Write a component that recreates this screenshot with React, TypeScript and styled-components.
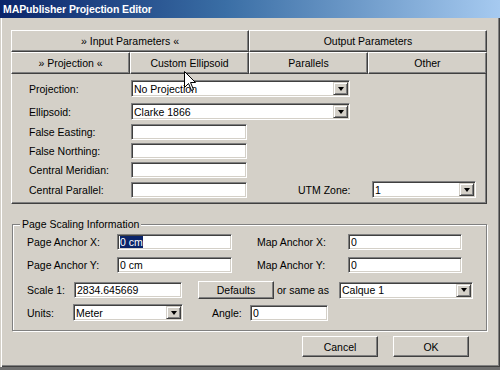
import styled, { createGlobalStyle } from "styled-components";

const GlobalStyle = createGlobalStyle`
  html, body {
    margin: 0;
    padding: 0;
    background: #6f6f6f;
  }
  body {
    font-family: "Liberation Sans", Arial, sans-serif;
    font-size: 10.5px;
    color: #000;
  }
`;

function ComboBox({ width, value, height = 17 }: { width: number; value: string; height?: number }) {
  return (
    <Field $w={width} $h={height}>
      <FieldText>{value}</FieldText>
      <DropButton>
        <DownArrow />
      </DropButton>
    </Field>
  );
}

function TextBox({ width, value, selected }: { width: number; value?: string; selected?: boolean }) {
  return (
    <Field $w={width} $h={16}>
      <FieldText>{selected ? <Selection>{value}</Selection> : value}</FieldText>
    </Field>
  );
}

function Cursor() {
  return (
    <CursorWrap>
      <svg width="13" height="21" viewBox="0 0 13 21">
        <path
          d="M0.5 0.5 L0.5 16.5 L4.5 12.5 L7.5 19.5 L9.5 18.5 L6.5 11.5 L11.5 11.5 Z"
          fill="#fff"
          stroke="#000"
          strokeWidth="1"
          strokeLinejoin="miter"
        />
      </svg>
    </CursorWrap>
  );
}

function App() {
  return (
    <>
      <GlobalStyle />
      <Window>
        <TitleBar>
          <Title>MAPublisher Projection Editor</Title>
        </TitleBar>
        <Body>
          <TabRow $cols={2}>
            <Tab>» Input Parameters «</Tab>
            <Tab>Output Parameters</Tab>
          </TabRow>
          <TabRow $cols={4}>
            <Tab>» Projection «</Tab>
            <Tab>Custom Ellipsoid</Tab>
            <Tab>Parallels</Tab>
            <Tab>Other</Tab>
          </TabRow>

          <Panel>
            <Row $mt={0}>
              <Label $w={102}>Projection:</Label>
              <ComboBox width={219} value="No Projection" />
            </Row>
            <Row $mt={6}>
              <Label $w={102}>Ellipsoid:</Label>
              <ComboBox width={219} value="Clarke 1866" />
            </Row>
            <Row $mt={4}>
              <Label $w={102}>False Easting:</Label>
              <TextBox width={116} />
            </Row>
            <Row $mt={3}>
              <Label $w={102}>False Northing:</Label>
              <TextBox width={116} />
            </Row>
            <Row $mt={3}>
              <Label $w={102}>Central Meridian:</Label>
              <TextBox width={116} />
            </Row>
            <Row $mt={3}>
              <Label $w={102}>Central Parallel:</Label>
              <TextBox width={116} />
              <Label $w={74} $ml={51}>UTM Zone:</Label>
              <ComboBox width={104} value="1" />
            </Row>
          </Panel>

          <GroupBox>
            <Legend>Page Scaling Information</Legend>
            <Row $mt={0}>
              <Label $w={90}>Page Anchor X:</Label>
              <TextBox width={115} value="0 cm" selected />
              <Label $w={91} $ml={25}>Map Anchor X:</Label>
              <TextBox width={114} value="0" />
            </Row>
            <Row $mt={7}>
              <Label $w={90}>Page Anchor Y:</Label>
              <TextBox width={115} value="0 cm" />
              <Label $w={91} $ml={25}>Map Anchor Y:</Label>
              <TextBox width={114} value="0" />
            </Row>
            <Row $mt={8}>
              <Label $w={47}>Scale 1:</Label>
              <TextBox width={108} value="2834.645669" />
              <Button $w={76} $h={18} $ml={16}>Defaults</Button>
              <Label $w={62} $ml={3}>or same as</Label>
              <ComboBox width={134} value="Calque 1" />
            </Row>
            <Row $mt={5}>
              <Label $w={46}>Units:</Label>
              <ComboBox width={110} value="Meter" />
              <Label $w={38} $ml={29}>Angle:</Label>
              <TextBox width={78} value="0" />
            </Row>
          </GroupBox>

          <ButtonRow>
            <Button $w={76} $h={21}>Cancel</Button>
            <Button $w={76} $h={21}>OK</Button>
          </ButtonRow>
        </Body>
        <Cursor />
      </Window>
    </>
  );
}

export default App;

const Window = styled.div`
  position: relative;
  width: 500px;
  height: 367px;
  box-sizing: border-box;
  background: #d4d0c8;
  box-shadow: inset 1px 0 0 #d4d0c8, inset 2px 0 0 #fff, inset -1px -1px 0 #404040,
    inset -2px -2px 0 #808080;
  overflow: hidden;
`;

const TitleBar = styled.div`
  height: 18px;
  display: flex;
  align-items: center;
  padding-left: 3px;
  background: linear-gradient(to right, #0a246a 0%, #3a6ea5 45%, #a6caf0 100%);
`;

const Title = styled.span`
  color: #fff;
  font-weight: 700;
  font-size: 10.5px;
  letter-spacing: -0.1px;
`;

const Body = styled.div`
  padding: 12px 13px 0 11px;
`;

const TabRow = styled.div<{ $cols: number }>`
  display: grid;
  grid-template-columns: repeat(${(p) => p.$cols}, 1fr);
`;

const Tab = styled.div`
  height: 22px;
  box-sizing: border-box;
  display: flex;
  align-items: center;
  justify-content: center;
  border-top: 1px solid #fff;
  border-left: 1px solid #fff;
  border-right: 1px solid #404040;
  border-bottom: 1px solid #404040;
  box-shadow: inset -1px -1px 0 #808080;
  white-space: nowrap;
`;

const Panel = styled.div`
  box-sizing: border-box;
  height: 130px;
  padding: 6px 10px 0 17px;
  border-left: 1px solid #fff;
  border-right: 1px solid #404040;
  border-bottom: 1px solid #404040;
  box-shadow: inset -1px -1px 0 #808080;
`;

const Row = styled.div<{ $mt: number }>`
  display: flex;
  align-items: center;
  margin-top: ${(p) => p.$mt}px;
`;

const Label = styled.span<{ $w: number; $ml?: number }>`
  width: ${(p) => p.$w}px;
  margin-left: ${(p) => p.$ml ?? 0}px;
  flex-shrink: 0;
  white-space: nowrap;
`;

const Field = styled.div<{ $w: number; $h: number }>`
  width: ${(p) => p.$w}px;
  height: ${(p) => p.$h}px;
  flex-shrink: 0;
  box-sizing: border-box;
  display: flex;
  align-items: stretch;
  background: #fff;
  border-top: 1px solid #808080;
  border-left: 1px solid #808080;
  border-right: 1px solid #fff;
  border-bottom: 1px solid #fff;
  box-shadow: inset 1px 1px 0 #404040, inset -1px -1px 0 #d4d0c8;
`;

const FieldText = styled.span`
  flex: 1;
  display: flex;
  align-items: center;
  padding-left: 2px;
  white-space: nowrap;
  overflow: hidden;
`;

const Selection = styled.span`
  background: #0a246a;
  color: #fff;
  line-height: 12px;
`;

const DropButton = styled.div`
  width: 15px;
  margin: 1px 1px 1px 0;
  box-sizing: border-box;
  display: flex;
  align-items: center;
  justify-content: center;
  background: #d4d0c8;
  border-top: 1px solid #d4d0c8;
  border-left: 1px solid #d4d0c8;
  border-right: 1px solid #404040;
  border-bottom: 1px solid #404040;
  box-shadow: inset 1px 1px 0 #fff, inset -1px -1px 0 #808080;
`;

const DownArrow = styled.div`
  width: 0;
  height: 0;
  border-left: 3.5px solid transparent;
  border-right: 3.5px solid transparent;
  border-top: 4px solid #000;
`;

const GroupBox = styled.fieldset`
  margin: 14px 0 0 1px;
  padding: 3px 10px 9px 14px;
  min-width: 0;
  border: 1px solid #808080;
  box-shadow: inset 1px 1px 0 #fff, 1px 1px 0 #fff;
`;

const Legend = styled.legend`
  margin-left: -7px;
  padding: 0 2px;
  line-height: 13px;
  background: #d4d0c8;
`;

const Button = styled.div<{ $w: number; $h: number; $ml?: number }>`
  width: ${(p) => p.$w}px;
  height: ${(p) => p.$h}px;
  margin-left: ${(p) => p.$ml ?? 0}px;
  flex-shrink: 0;
  box-sizing: border-box;
  display: flex;
  align-items: center;
  justify-content: center;
  background: #d4d0c8;
  border-top: 1px solid #fff;
  border-left: 1px solid #fff;
  border-right: 1px solid #404040;
  border-bottom: 1px solid #404040;
  box-shadow: inset -1px -1px 0 #808080;
`;

const ButtonRow = styled.div`
  display: flex;
  justify-content: flex-end;
  gap: 15px;
  margin-top: 5px;
  padding-right: 18px;
`;

const CursorWrap = styled.div`
  position: absolute;
  left: 184px;
  top: 71px;
  width: 13px;
  height: 21px;
  line-height: 0;
`;
